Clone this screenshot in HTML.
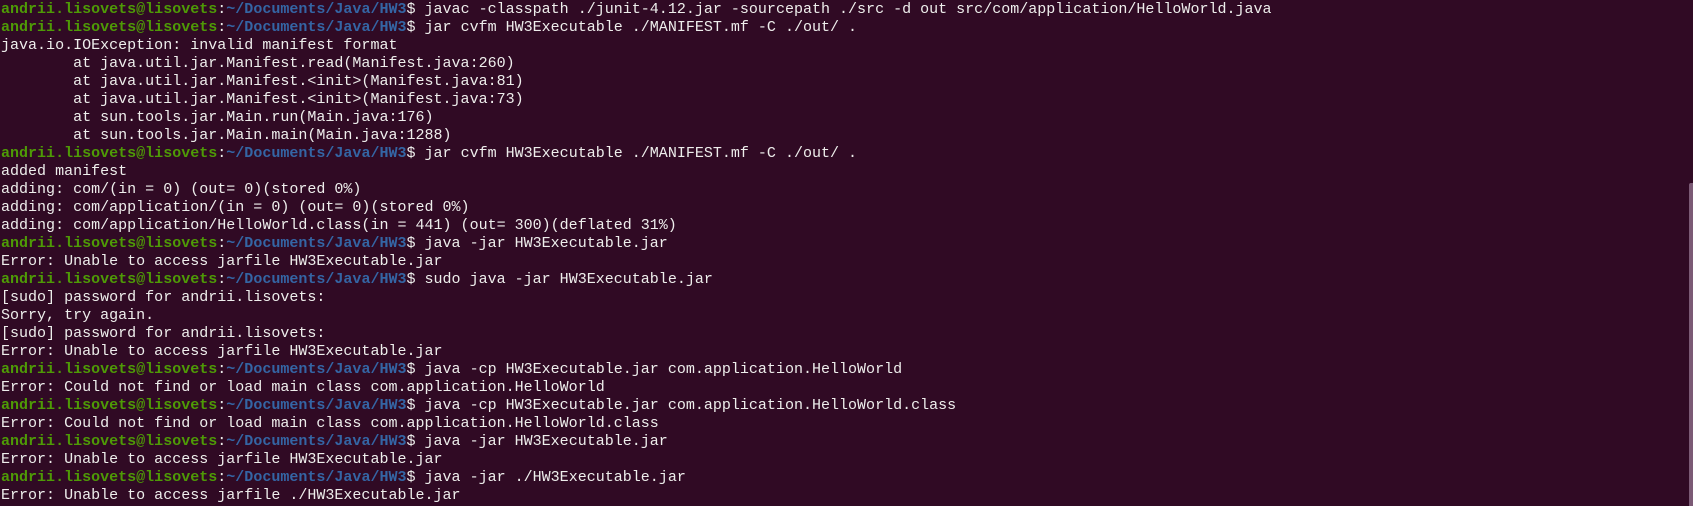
<!DOCTYPE html>
<html><head><meta charset="utf-8"><style>
html,body{margin:0;padding:0;background:#300a24;width:1693px;height:506px;overflow:hidden}
pre{margin:0;padding:0 0 0 1px;font-family:"Liberation Mono",monospace;font-size:15.02px;line-height:18px;color:#eeeeec;white-space:pre}
.g{color:#4e9a06;font-weight:bold}.b{color:#3465a4;font-weight:bold}
.sb{position:absolute;left:1689px;top:183px;width:4px;height:323px;background:#7b5a75;border-radius:2px 0 0 0}
</style></head><body>
<pre><span class="g">andrii.lisovets@lisovets</span>:<span class="b">~/Documents/Java/HW3</span>$ javac -classpath ./junit-4.12.jar -sourcepath ./src -d out src/com/application/HelloWorld.java
<span class="g">andrii.lisovets@lisovets</span>:<span class="b">~/Documents/Java/HW3</span>$ jar cvfm HW3Executable ./MANIFEST.mf -C ./out/ .
java.io.IOException: invalid manifest format
        at java.util.jar.Manifest.read(Manifest.java:260)
        at java.util.jar.Manifest.&lt;init&gt;(Manifest.java:81)
        at java.util.jar.Manifest.&lt;init&gt;(Manifest.java:73)
        at sun.tools.jar.Main.run(Main.java:176)
        at sun.tools.jar.Main.main(Main.java:1288)
<span class="g">andrii.lisovets@lisovets</span>:<span class="b">~/Documents/Java/HW3</span>$ jar cvfm HW3Executable ./MANIFEST.mf -C ./out/ .
added manifest
adding: com/(in = 0) (out= 0)(stored 0%)
adding: com/application/(in = 0) (out= 0)(stored 0%)
adding: com/application/HelloWorld.class(in = 441) (out= 300)(deflated 31%)
<span class="g">andrii.lisovets@lisovets</span>:<span class="b">~/Documents/Java/HW3</span>$ java -jar HW3Executable.jar
Error: Unable to access jarfile HW3Executable.jar
<span class="g">andrii.lisovets@lisovets</span>:<span class="b">~/Documents/Java/HW3</span>$ sudo java -jar HW3Executable.jar
[sudo] password for andrii.lisovets:
Sorry, try again.
[sudo] password for andrii.lisovets:
Error: Unable to access jarfile HW3Executable.jar
<span class="g">andrii.lisovets@lisovets</span>:<span class="b">~/Documents/Java/HW3</span>$ java -cp HW3Executable.jar com.application.HelloWorld
Error: Could not find or load main class com.application.HelloWorld
<span class="g">andrii.lisovets@lisovets</span>:<span class="b">~/Documents/Java/HW3</span>$ java -cp HW3Executable.jar com.application.HelloWorld.class
Error: Could not find or load main class com.application.HelloWorld.class
<span class="g">andrii.lisovets@lisovets</span>:<span class="b">~/Documents/Java/HW3</span>$ java -jar HW3Executable.jar
Error: Unable to access jarfile HW3Executable.jar
<span class="g">andrii.lisovets@lisovets</span>:<span class="b">~/Documents/Java/HW3</span>$ java -jar ./HW3Executable.jar
Error: Unable to access jarfile ./HW3Executable.jar</pre>
<div class="sb"></div>
</body></html>
